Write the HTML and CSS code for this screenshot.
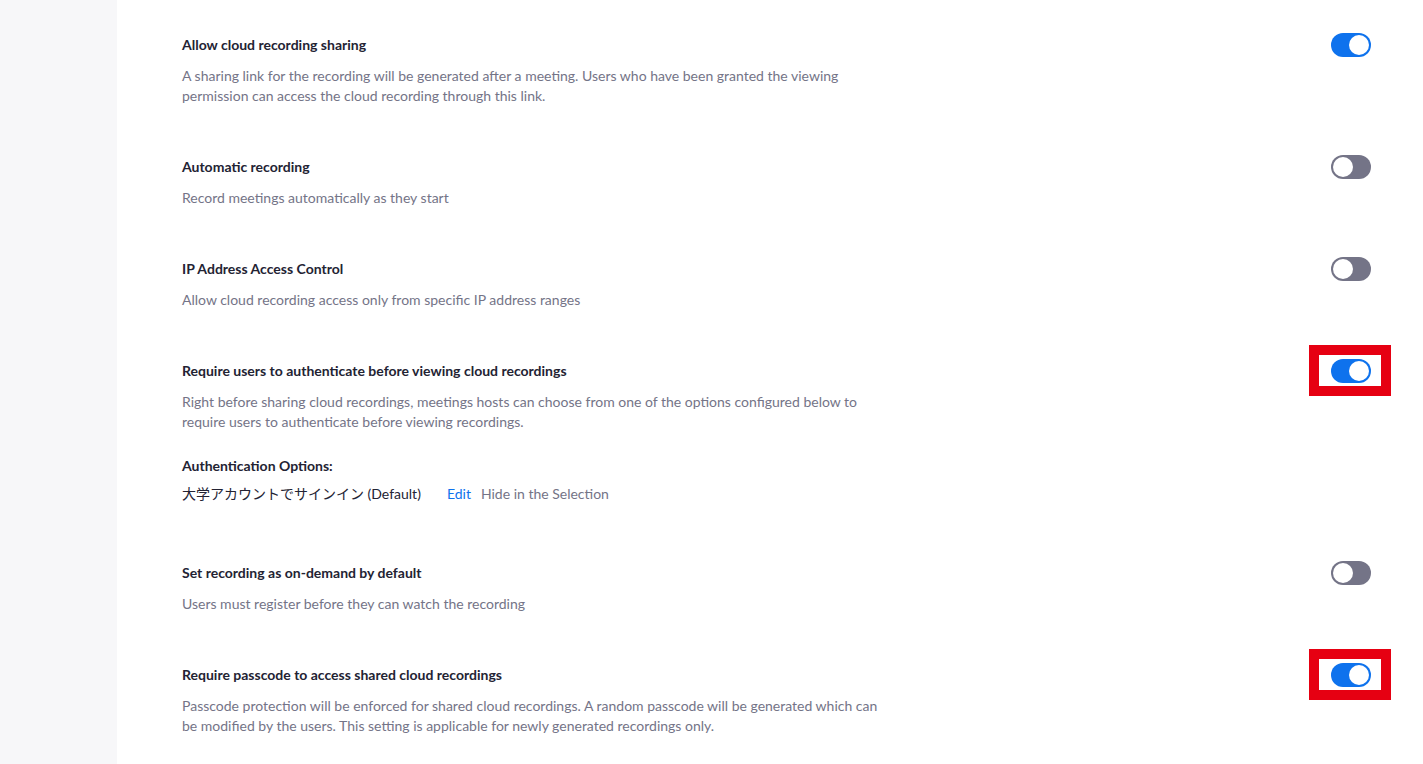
FILE: index.html
```html
<!DOCTYPE html>
<html>
  <head>
    <meta name="viewport" content="width=device-width, initial-scale=1.0" />
    <title>Recording settings</title>
    <link rel="stylesheet" href="styles.css">
  </head>
  <body>
    <div class="page">
      <aside class="sidebar"></aside>
      <main class="settings">
        <div class="setting">
          <div class="setting-text">
            <div class="setting-title">Allow cloud recording sharing</div>
            <div class="setting-desc">A sharing link for the recording will be generated after a meeting. Users who have been granted the viewing permission can access the cloud recording through this link.</div>
          </div>
          <span class="toggle on"></span>
        </div>

        <div class="setting">
          <div class="setting-text">
            <div class="setting-title">Automatic recording</div>
            <div class="setting-desc">Record meetings automatically as they start</div>
          </div>
          <span class="toggle"></span>
        </div>

        <div class="setting">
          <div class="setting-text">
            <div class="setting-title">IP Address Access Control</div>
            <div class="setting-desc">Allow cloud recording access only from specific IP address ranges</div>
          </div>
          <span class="toggle"></span>
        </div>

        <div class="setting">
          <div class="setting-text">
            <div class="setting-title">Require users to authenticate before viewing cloud recordings</div>
            <div class="setting-desc">Right before sharing cloud recordings, meetings hosts can choose from one of the options configured below to require users to authenticate before viewing recordings.</div>
            <div class="auth">
              <div class="auth-title">Authentication Options:</div>
              <div class="auth-option">
                <span class="auth-name">大学アカウントでサインイン (Default)</span>
                <a class="auth-edit" href="#">Edit</a>
                <span class="auth-hide">Hide in the Selection</span>
              </div>
            </div>
          </div>
          <span class="toggle on marked"></span>
        </div>

        <div class="setting">
          <div class="setting-text">
            <div class="setting-title">Set recording as on-demand by default</div>
            <div class="setting-desc">Users must register before they can watch the recording</div>
          </div>
          <span class="toggle"></span>
        </div>

        <div class="setting">
          <div class="setting-text">
            <div class="setting-title">Require passcode to access shared cloud recordings</div>
            <div class="setting-desc">Passcode protection will be enforced for shared cloud recordings. A random passcode will be generated which can be modified by the users. This setting is applicable for newly generated recordings only.</div>
          </div>
          <span class="toggle on marked"></span>
        </div>
      </main>
    </div>
  </body>
</html>
```

FILE: styles.css
```css
body {
  margin: 0;
  padding: 0;
  background-color: #fff;
  font-family: Lato, "Noto Sans CJK JP", sans-serif;
  font-size: 14px;
  color: #232333;
  overflow: hidden;
}

.page {
  display: flex;
  min-height: 100vh;
}

.sidebar {
  width: 117px;
  flex-shrink: 0;
  background-color: #f7f7f9;
}

.settings {
  flex: 1;
  padding: 10px 52px 0 65px;
}

.setting {
  display: flex;
  justify-content: space-between;
  align-items: flex-start;
  padding: 25px 0 26px;
}

.setting-text {
  max-width: 700px;
}

.setting-title {
  font-weight: bold;
  line-height: 20px;
  color: #232333;
}

.setting-desc {
  margin-top: 11px;
  line-height: 20px;
  color: #747487;
}

.auth {
  margin-top: 24px;
  margin-bottom: 8px;
}

.auth-title {
  font-weight: bold;
  line-height: 20px;
}

.auth-option {
  margin-top: 8px;
  line-height: 20px;
  display: flex;
}

.auth-name {
  color: #232333;
}

.auth-edit {
  margin-left: 26px;
  color: #0e72ed;
  text-decoration: none;
}

.auth-hide {
  margin-left: 10px;
  color: #747487;
}

/* switch */
.toggle {
  position: relative;
  flex-shrink: 0;
  width: 40px;
  height: 24px;
  margin-top: -2px;
  border-radius: 12px;
  background-color: #747487;
  box-sizing: border-box;
}

.toggle::before {
  content: "";
  position: absolute;
  top: 2px;
  left: 2px;
  width: 20px;
  height: 20px;
  border-radius: 50%;
  background-color: #fff;
}

.toggle.on {
  background-color: #0e72ed;
}

.toggle.on::before {
  left: 18px;
}

.toggle.marked::after {
  content: "";
  position: absolute;
  top: -14px;
  left: -22px;
  width: 82px;
  height: 51px;
  border: 10px solid #e60012;
  box-sizing: border-box;
}
```
